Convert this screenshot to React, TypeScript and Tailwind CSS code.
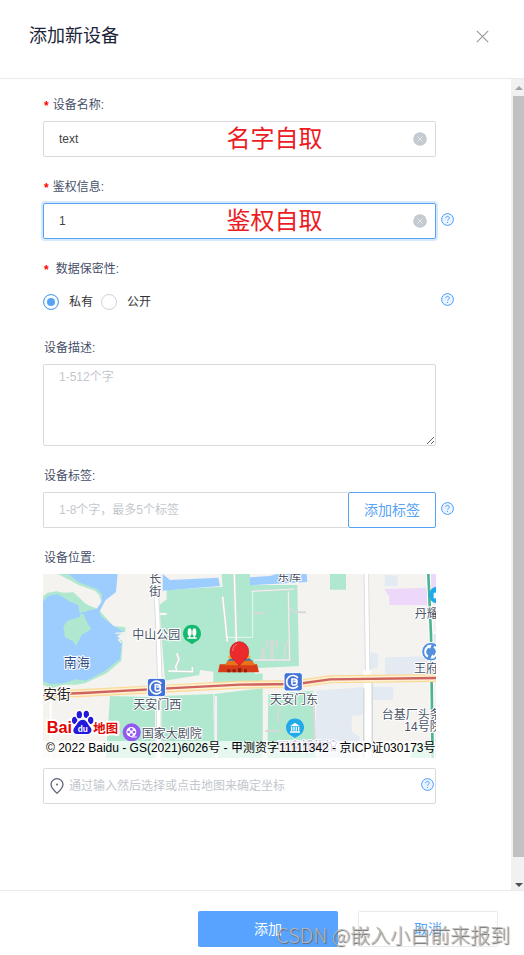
import type { ReactNode } from "react";

function HelpButton({ label }: { label: string }) {
  return (
    <button aria-label={label} className="mb-1 shrink-0 text-[#4a9dff]" type="button">
      <svg className="block h-[13px] w-[13px]" fill="none" viewBox="0 0 13 13">
        <circle cx="6.5" cy="6.5" fill="#eaf4ff" r="5.9" stroke="currentColor" strokeWidth="1" />
        <path d="M4.7 5.1c0-1 .8-1.7 1.8-1.7s1.8.7 1.8 1.6c0 1.2-1.6 1.3-1.7 2.7M6.5 9v1" stroke="currentColor" />
      </svg>
    </button>
  );
}

function ClearButton({ label }: { label: string }) {
  return (
    <button aria-label={label} className="shrink-0" type="button">
      <svg className="block h-[14px] w-[14px]" fill="none" viewBox="0 0 14 14">
        <circle cx="7" cy="7" fill="#c4cacf" r="6.8" />
        <path d="M4.2 4.2l5.6 5.6M9.8 4.2l-5.6 5.6" stroke="#e8ebee" strokeWidth="0.9" />
      </svg>
    </button>
  );
}

function FieldLabel({ children, htmlFor, required }: { children: ReactNode; htmlFor: string; required?: boolean }) {
  return (
    <label className="flex h-[34px] items-center pt-[2px] pl-px text-xs text-[#475069]" htmlFor={htmlFor}>
      {required && <span className="mr-1 pt-[2px] font-bold text-[#f00]">*</span>}
      {children}
    </label>
  );
}

function TextField({
  defaultValue,
  focused,
  help,
  id,
  label,
  note,
}: {
  defaultValue: string;
  focused?: boolean;
  help?: string;
  id: string;
  label: string;
  note: string;
}) {
  return (
    <div>
      <FieldLabel htmlFor={id} required>
        {label}
      </FieldLabel>
      <div className="flex items-center gap-[5px]">
        <div
          className={
            focused
              ? "relative flex h-9 flex-1 items-center rounded-xs border border-[#57a3f3] pr-2 shadow-[0_0_0_2px_#d6e8fc]"
              : "relative flex h-9 flex-1 items-center rounded-xs border border-[#d7dbdf] pr-2"
          }
        >
          <input
            className="h-full min-w-0 flex-1 bg-transparent pl-[15px] text-xs text-[#444] outline-none"
            defaultValue={defaultValue}
            id={id}
            type="text"
          />
          <ClearButton label={`清空${label}`} />
          <span className="pointer-events-none absolute inset-0 flex items-center justify-center pl-[70px] text-2xl text-[#ea1c24]">
            {note}
          </span>
        </div>
        {help ? <HelpButton label={help} /> : <span className="w-[13px]" />}
      </div>
    </div>
  );
}

function MetroMark({ x, y }: { x: number; y: number }) {
  return (
    <g transform={`translate(${x} ${y})`}>
      <rect fill="#4373d9" height="55" rx="8" stroke="#fff" strokeWidth="3" width="55" />
      <path
        d="M42 16a19 19 0 1 0 0 23M24 36V19h7c5 0 8 3 8 7H28M39 28c0 6-3 9-8 9h-7"
        fill="none"
        stroke="#fff"
        strokeWidth="5"
      />
    </g>
  );
}

function MapView() {
  return (
    <div className="relative h-[184px] flex-1 overflow-hidden">
      <svg
        aria-label="设备位置地图"
        className="block h-full w-full"
        preserveAspectRatio="xMidYMid slice"
        role="img"
        viewBox="39 42 1179 552"
      >
        <rect fill="#f4f3f0" height="552" width="1179" x="39" y="42" />

        {/* lake, green banks first */}
        <path
          d="M39 110L52 98 80 94 100 98 130 97 150 115 165 130 185 140 202 146 212 155 250 198 287 202 284 222 262 228 278 245 274 302 230 340 165 370 140 374 100 374 65 384 39 375Z"
          fill="#b0e8cf"
        />
        <path
          d="M111 41H263L258 96 226 121 208 156 214 170 256 201 282 216 262 226 275 250 270 296 226 332 168 362 138 358 100 370 60 372 39 362V125L54 108 80 102 106 113 140 122 152 150 178 148 200 147 214 126 214 106 200 88 151 71Z"
          fill="#9dccff"
        />
        <g fill="#b0e8cf">
          <path d="M80 100L106 110 135 114 155 130 185 140 202 146 180 150 165 156 148 158 145 135 122 126Z" />
          <path d="M100 200L112 182 150 170 152 160 163 165 168 182 184 207 155 225 146 242 138 258 130 244 105 232Z" />
          <path d="M111 42L151 69 200 86 217 104 213 122 208 106 195 92 148 76 84 42Z" />
        </g>
        <path d="M256 220l28-2-18 12 12 4-12 6 8 8" fill="none" stroke="#f4f3f0" strokeWidth="4" />

        {/* parks */}
        <g fill="#b0e8cf">
          <path d="M575 42H660V75H802L807 318 670 325 675 342 698 340V362L550 370V335L510 330 508 345 405 362 388 135 410 118V90L578 80Z" />
          <path d="M240 408L375 412V594H228ZM395 408L550 402 553 594H395ZM553 402L698 385V594H565ZM715 402L850 392 857 594H712ZM900 42h48v47h-48zM1150 555l68-15v60h-80z" />
        </g>
        <path d="M398 42L420 60 565 53 570 78 398 92ZM660 52L720 48 740 42H830L832 66 660 76Z" fill="#9dccff" />

        {/* building blocks */}
        <g fill="#e3eaf2">
          <path d="M1065 45l38 2v32h-40zM1065 292l145-3v55h-145zM1022 275l24 8-4 40-28 8zM858 392l142-10v83l-35 3v47l25 15-10 64H858zM1028 380h62v40h-65zM1206 220h12v60h-12z" />
        </g>
        <path d="M1063 87L1195 83V135H1078V110ZM1203 42h15v50h-15z" fill="#edd8f9" />

        {/* streets */}
        <g fill="none" stroke="#d5dad9">
          <path d="M376 42L383 180 390 370M386 420V594M1009 42L1013 340M1013 385V594" strokeWidth="16" />
          <path d="M1014 370V594" strokeWidth="30" />
          <path d="M388 162h22M440 280l7 18-10 22 3 12M415 333l72 2V322M613 42L621 310M578 110L592 245M558 408V594" strokeWidth="8" />
          <path d="M665 94L793 87M775 95L779 300H672M776 140L793 157H828M668 160h36M765 300V262L776 240M745 408V487M706 513h46M850 408L856 570" strokeWidth="6" />
          <path d="M699 262v35M726 240v58" strokeWidth="10" />
          <path d="M712 240v22M740 240v22" strokeWidth="5" />
        </g>
        <g fill="none" stroke="#fff">
          <path d="M376 42L383 180 390 370M386 420V594" strokeWidth="11" />
          <path d="M1009 42L1013 340" strokeWidth="11" />
          <path d="M1011 330V385" strokeWidth="22" />
          <path d="M1014 370V594" strokeWidth="21" />
          <path d="M388 162h22M440 280l7 18-10 22 3 12M415 333l72 2V322M613 42L621 310M578 110L592 245M558 408V594" strokeWidth="4" />
          <path d="M668 95V232H590M665 94L793 87M775 95L779 300H672" strokeWidth="2" />
          <path d="M1200 218h18M62 420V594" strokeWidth="6" />
        </g>
        <path d="M1195 42L1203 225 1208 594" fill="none" stroke="#fff" strokeWidth="14" />
        <path d="M1195 42L1203 225 1208 594" fill="none" stroke="#4db491" strokeWidth="8" />

        {/* Chang'an avenue with the metro line in it */}
        <g fill="none">
          <path d="M39 404L160 399 400 386 630 374 800 372 900 358 1218 354" stroke="#fbd896" strokeWidth="24" />
          <path d="M39 404L160 399 400 386 630 374 800 372 900 358 1218 354" stroke="#fff0cf" strokeWidth="17" />
          <path d="M39 404L160 399 400 386 630 374 800 372 900 358 1218 354" stroke="#ce6360" strokeWidth="7" />
        </g>

        {/* Tiananmen gate */}
        <path d="M564 337l5-24h112l6 24z" fill="#d83c19" />
        <path d="M584 316l10-15h72l10 15z" fill="#e8731b" />
        <path d="M592 302l10-8h54l12 8z" fill="#3f78ae" />
        <path d="M594 291l8-9h52l8 9-8 5h-54z" fill="#f3a32a" />
        <path d="M592 337v-9h9v9zm16 0v-9h9v9zm16 0v-13h10v13zm18 0v-9h9v9z" fill="#8e1e10" />
        <path d="M628 318c-8-15-28-20-28-43a28 30 0 0 1 56 0c0 23-20 28-28 43z" fill="#eb2a2d" stroke="#c2161c" strokeWidth="2" />
        <path d="M608 273c0-10 5-17 13-20" fill="none" stroke="#f77" strokeWidth="3" />

        {/* places */}
        <path d="M486 253l-10-7a27 27 0 1 1 20 0z" fill="#16ba70" />
        <g fill="#fff">
          <ellipse cx="479" cy="217" rx="6" ry="12" />
          <ellipse cx="493" cy="217" rx="6" ry="12" />
          <path d="M477 226h4v9h-4zM491 226h4v9h-4zM472 232h28v4h-28z" />
        </g>
        <MetroMark x={352} y={355} />
        <MetroMark x={762} y={338} />
        <circle cx="1203" cy="275" fill="#5290dd" r="28" stroke="#fff" strokeWidth="3" />
        <path d="M1198 259a17 17 0 0 0-4 31M1208 291a17 17 0 0 0 4-31" fill="none" stroke="#fff" strokeWidth="6" />
        <path d="M1192 255l13-1-5 13zM1215 295l-14 1 6-13z" fill="#fff" />
        <circle cx="1222" cy="105" fill="#20a9ec" r="25" />
        <path d="M1211 98h12v17h-12z" fill="#fff" />
        <path d="M795 534l-11-7a27 27 0 1 1 22 0z" fill="#22a9ea" />
        <path d="M780 499l15-11 15 11zM783 501h4v11h-4zm7 0h4v11h-4zm7 0h4v11h-4zm7 0h4v11h-4zM780 514h30v4h-30z" fill="#fff" />
        <circle cx="305" cy="517" fill="#9159ef" r="27" />
        <circle cx="304" cy="516" fill="#fff" r="15" />
        <path d="M304 531h16" stroke="#fff" strokeWidth="3" />
        <g fill="#9159ef">
          <circle cx="304" cy="508" r="4" />
          <circle cx="296" cy="516" r="4" />
          <circle cx="312" cy="516" r="4" />
          <circle cx="304" cy="524" r="4" />
        </g>

        <g
          fill="#4c5566"
          fontFamily="'Liberation Sans', 'Noto Sans CJK SC', sans-serif"
          fontSize="36"
          paintOrder="stroke"
          stroke="#fff"
          strokeLinejoin="round"
          strokeWidth="6"
        >
          <text x="358" y="68">长</text>
          <text x="358" y="107">街</text>
          <text x="307" y="237">中山公园</text>
          <text fill="#2d4f87" fontSize="39" x="101" y="320">南海</text>
          <text x="742" y="62">东库</text>
          <text x="1154" y="175">丹耀</text>
          <text x="1152" y="340">王府</text>
          <text x="310" y="448">天安门西</text>
          <text x="720" y="432">天安门东</text>
          <text fill="#222" fontSize="41" x="40" y="418">安街</text>
          <text x="335" y="534">国家大剧院</text>
          <text x="1055" y="477">台基厂头条</text>
          <text x="1123" y="514">14号院</text>
          <text fill="#8f78b8" x="742" y="572">国家博物馆</text>
        </g>

        {/* Baidu map logo */}
        <g
          fontFamily="'Liberation Sans', 'Noto Sans CJK SC', sans-serif"
          fontWeight="700"
          paintOrder="stroke"
          stroke="#fff"
          strokeLinejoin="round"
          strokeWidth="12"
        >
          <text fill="#e10602" fontSize="49" x="50" y="520">Bai</text>
          <text fill="#e10602" fontSize="37" x="190" y="518">地图</text>
          <g fill="#2319dc" strokeWidth="9">
            <ellipse cx="134" cy="481" rx="8" ry="11" />
            <ellipse cx="148" cy="464" rx="8" ry="11" />
            <ellipse cx="169" cy="463" rx="8" ry="11" />
            <ellipse cx="182" cy="481" rx="8" ry="11" />
            <path d="M158 479c13 0 14 13 22 21 9 9 4 22-9 22h-28c-13 0-17-12-8-22 8-9 10-21 23-21z" />
          </g>
          <text fill="#fff" fontSize="25" stroke="none" x="143" y="515">du</text>
        </g>
      </svg>
      <div className="absolute inset-x-0 bottom-0 h-[17px] overflow-hidden bg-white/70 pl-[3px] text-xs leading-[14px] whitespace-nowrap text-black">
        © 2022 Baidu - GS(2021)6026号 - 甲测资字11111342 - 京ICP证030173号
      </div>
    </div>
  );
}

function RadioOption({ checked, label }: { checked?: boolean; label: string }) {
  return (
    <label className="flex items-center gap-[10px] text-xs text-[#333]">
      <input
        className="h-4 w-4 appearance-none rounded-full border border-[#d0d4d8] bg-white checked:border-[#57a3f3] checked:bg-[#57a3f3] checked:shadow-[inset_0_0_0_3px_#fff]"
        defaultChecked={checked}
        name="privacy"
        type="radio"
      />
      {label}
    </label>
  );
}

function ScrollTrack() {
  return (
    <div className="flex w-[13px] shrink-0 flex-col bg-[#f1f1f1] pl-[2px]">
      <svg className="h-[17px] w-[11px]" viewBox="0 0 11 17">
        <path d="M2 11l4-4 4 4z" fill="#a3a3a3" />
      </svg>
      <div className="flex-1 bg-[#c1c1c1]" />
      <svg className="mt-4 h-[17px] w-[11px]" viewBox="0 0 11 17">
        <path d="M2 10h8l-4 4z" fill="#505050" />
      </svg>
    </div>
  );
}

export default function App() {
  return (
    <div className="flex min-h-screen flex-col bg-white font-['Liberation_Sans','Noto_Sans_CJK_SC',sans-serif]">
      <header className="flex items-center justify-between border-b border-[#e8eaec] pt-[22px] pr-[35px] pb-7 pl-[29px]">
        <h1 className="text-lg leading-7 text-[#1c2438]">添加新设备</h1>
        <button aria-label="关闭" className="text-[#999]" type="button">
          <svg className="block h-[13px] w-[13px]" fill="none" stroke="currentColor" strokeWidth="1.1" viewBox="0 0 13 13">
            <path d="M.8.8l11.4 11.4M12.2.8L.8 12.2" />
          </svg>
        </button>
      </header>

      <div className="flex flex-1">
        <form className="flex flex-1 flex-col gap-3 pt-2 pr-[57px] pb-8 pl-[43px]" id="device-form">
          <TextField defaultValue="text" id="name" label="设备名称:" note="名字自取" />
          <TextField defaultValue="1" focused help="鉴权信息说明" id="auth" label="鉴权信息:" note="鉴权自取" />

          <fieldset>
            <legend className="flex h-[34px] items-center pt-[2px] pl-px text-xs text-[#475069]">
              <span className="mr-[7px] pt-[2px] font-bold text-[#f00]">*</span>
              数据保密性:
            </legend>
            <div className="flex h-[33px] items-center justify-between">
              <div className="flex items-center gap-2">
                <RadioOption checked label="私有" />
                <RadioOption label="公开" />
              </div>
              <HelpButton label="数据保密性说明" />
            </div>
          </fieldset>

          <div>
            <FieldLabel htmlFor="description">设备描述:</FieldLabel>
            <div className="pr-[18px]">
              <textarea
                className="block h-[82px] w-full resize rounded-xs border border-[#d7dbdf] px-[15px] py-1 text-xs text-[#444] outline-none placeholder:text-[#c3c7cd]"
                id="description"
                placeholder="1-512个字"
              />
            </div>
          </div>

          <div>
            <FieldLabel htmlFor="tag">设备标签:</FieldLabel>
            <div className="flex items-center gap-[5px]">
              <div className="flex h-9 flex-1">
                <input
                  className="min-w-0 flex-1 rounded-l-xs border border-r-0 border-[#d7dbdf] px-[15px] text-xs text-[#444] outline-none placeholder:text-[#c3c7cd]"
                  id="tag"
                  placeholder="1-8个字，最多5个标签"
                  type="text"
                />
                <button className="rounded-xs border border-[#57a3f3] px-[15px] text-sm text-[#57a3f3]" type="button">
                  添加标签
                </button>
              </div>
              <HelpButton label="设备标签说明" />
            </div>
          </div>

          <div>
            <FieldLabel htmlFor="location">设备位置:</FieldLabel>
            <div className="flex flex-col gap-[10px] pr-[18px]">
              <div className="flex">
                <MapView />
              </div>
              <div className="flex h-9 items-center rounded-xs border border-[#d7dbdf] pr-[1px] pl-[6px]">
                <svg className="h-4 w-[14px] shrink-0" fill="none" stroke="#5b6475" strokeWidth="1.3" viewBox="0 0 14 16">
                  <path d="M7 15.3C3.5 12 1 9.8 1 6.5a6 5.8 0 0 1 12 0C13 9.8 10.5 12 7 15.3z" />
                  <circle cx="7" cy="6.5" fill="#5b6475" r="1" stroke="none" />
                </svg>
                <input
                  className="h-full min-w-0 flex-1 bg-transparent pl-[5px] text-xs text-[#444] outline-none placeholder:text-[#c3c7cd]"
                  id="location"
                  placeholder="通过输入然后选择或点击地图来确定坐标"
                  type="text"
                />
                <HelpButton label="设备位置说明" />
              </div>
            </div>
          </div>
        </form>
        <ScrollTrack />
      </div>

      <footer className="relative flex justify-end gap-5 border-t border-[#e8eaec] pt-5 pr-[26px] pb-2 text-sm">
        <button className="h-9 w-[140px] rounded-xs bg-[#57a3ff] text-white" form="device-form" type="button">
          添加
        </button>
        <button className="h-9 w-[140px] rounded-xs border border-[#e8eaf0] text-[#57a3f3]" type="button">
          取消
        </button>
        <span className="pointer-events-none absolute right-[14px] bottom-[6px] font-['Noto_Sans_CJK_SC',sans-serif] text-xl leading-7 font-light whitespace-nowrap text-[#bbb]/90 [text-shadow:1px_1px_1px_#666]">
          CSDN @嵌入小白前来报到
        </span>
      </footer>
    </div>
  );
}
